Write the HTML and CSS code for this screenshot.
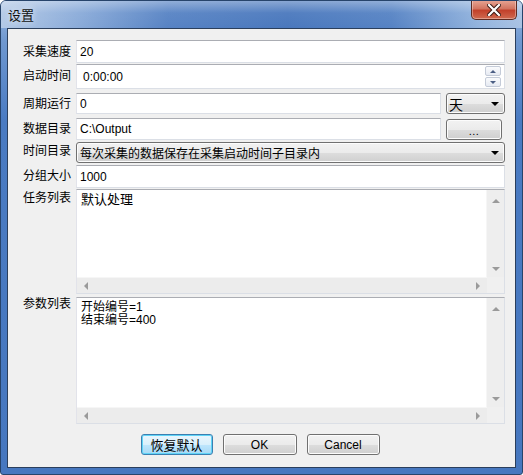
FILE: index.html
```html
<!DOCTYPE html>
<html lang="zh-CN">
<head>
  <meta charset="UTF-8">
  <title>设置</title>
  <link rel="stylesheet" href="styles.css">
</head>
<body>
  <div class="window">
    <div class="titlebar">
      <span class="title">设置</span>
      <div class="close-btn">
        <svg width="14" height="12" viewBox="0 0 14 12">
          <path d="M2 1 L12 11 M12 1 L2 11" stroke="#3a1a14" stroke-width="4.2" stroke-linecap="square"/>
          <path d="M2 1 L12 11 M12 1 L2 11" stroke="#ffffff" stroke-width="2.2" stroke-linecap="square"/>
        </svg>
      </div>
    </div>

    <div class="client">
      <div class="form">
        <div class="row r1">
          <label>采集速度</label>
          <div class="field edit h23"><span class="val">20</span></div>
        </div>

        <div class="row r2">
          <label>启动时间</label>
          <div class="field edit h25 spin-edit">
            <span class="val time">0:00:00</span>
            <div class="spinner">
              <div class="spin-btn"><span class="tri-up"></span></div>
              <div class="spin-btn"><span class="tri-down"></span></div>
            </div>
          </div>
        </div>

        <div class="row r3">
          <label>周期运行</label>
          <div class="split">
            <div class="field edit h21 grow"><span class="val">0</span></div>
            <div class="combo unit h21">
              <span class="combo-text">天</span>
              <span class="arrow"></span>
            </div>
          </div>
        </div>

        <div class="row r4">
          <label>数据目录</label>
          <div class="split">
            <div class="field edit h22 grow"><span class="val">C:\Output</span></div>
            <div class="btn browse">...</div>
          </div>
        </div>

        <div class="row r5">
          <label>时间目录</label>
          <div class="combo h21">
            <span class="combo-text">每次采集的数据保存在采集启动时间子目录内</span>
            <span class="arrow"></span>
          </div>
        </div>

        <div class="row r6">
          <label>分组大小</label>
          <div class="field edit h23"><span class="val">1000</span></div>
        </div>

        <div class="row r7">
          <label class="top">任务列表</label>
          <div class="memo h104">
            <div class="memo-body">
              <div class="memo-text">默认处理</div>
              <div class="vscroll">
                <span class="sa-up"></span>
                <span class="sa-down"></span>
              </div>
            </div>
            <div class="memo-foot">
              <div class="hscroll">
                <span class="sa-left"></span>
                <span class="sa-right"></span>
              </div>
              <div class="corner"></div>
            </div>
          </div>
        </div>

        <div class="row r8">
          <label class="top">参数列表</label>
          <div class="memo h126">
            <div class="memo-body">
              <div class="memo-text">开始编号=1<br>结束编号=400</div>
              <div class="vscroll">
                <span class="sa-up"></span>
                <span class="sa-down"></span>
              </div>
            </div>
            <div class="memo-foot">
              <div class="hscroll">
                <span class="sa-left"></span>
                <span class="sa-right"></span>
              </div>
              <div class="corner"></div>
            </div>
          </div>
        </div>
      </div>

      <div class="buttons">
        <div class="btn default w72">恢复默认</div>
        <div class="btn w74">OK</div>
        <div class="btn w73">Cancel</div>
      </div>
    </div>
  </div>
</body>
</html>
```

FILE: styles.css
```css
body {
  margin: 0;
  background-color: #ffffff;
  font-family: 'Liberation Sans', 'Noto Sans CJK SC', sans-serif;
  font-size: 12px;
  color: #000;
}
.window {
  width: 523px;
  height: 475px;
  box-sizing: border-box;
  border: 1px solid #27446b;
  border-radius: 6px 6px 3px 3px;
  background: linear-gradient(to bottom, #9fbbe0 0px, #6f98d0 40px, #4a7bc2 120px, #4677bf 100%);
  display: flex;
  flex-direction: column;
  overflow: hidden;
}
.titlebar {
  height: 27px;
  display: flex;
  align-items: flex-start;
  position: relative;
  background:
    linear-gradient(to bottom, rgba(255,255,255,0.35) 0px, rgba(255,255,255,0.05) 12px, rgba(0,0,0,0) 27px),
    linear-gradient(to right, #b3c9e6 0%, #8aabd9 15%, #5783c4 32%, #4a78bd 55%, #5683c4 75%, #93b4de 92%, #a9c2e3 100%);
}
.title {
  font-family: 'Noto Sans CJK SC', sans-serif;
  font-size: 13px;
  color: #111;
  margin: 5px 0 0 7px;
  line-height: 18px;
  text-shadow: 0 0 6px rgba(255,255,255,0.9);
}
.close-btn {
  position: absolute;
  top: -1px;
  right: 5px;
  width: 46px;
  height: 20px;
  box-sizing: border-box;
  border: 1px solid #5e2b22;
  border-top: none;
  border-radius: 0 0 5px 5px;
  background: linear-gradient(to bottom, #e8a796 0%, #d27561 45%, #c2412b 55%, #d06a50 100%);
  box-shadow: inset 0 0 0 1px rgba(255,255,255,0.35);
  display: flex;
  align-items: center;
  justify-content: center;
}
.client {
  flex-grow: 1;
  margin: 0 6px 6px 6px;
  background-color: #f0f0f0;
  border: 1px solid #2b3f5c;
  display: flex;
  flex-direction: column;
}
.form {
  padding: 11px 10px 0 15px;
  display: flex;
  flex-direction: column;
}
.row {
  display: flex;
  align-items: flex-start;
}
.row label {
  width: 53px;
  flex-shrink: 0;
  font-family: 'Noto Sans CJK SC', sans-serif;
  font-size: 12px;
  line-height: 16px;
  padding-top: 3px;
  color: #000;
}
.row label.top {
  padding-top: 0;
}
.r1 { height: 24px; }
.r2 { height: 29px; }
.r3 { height: 25px; }
.r3 label { padding-top: 2px; }
.r4 { height: 24px; }
.r4 label { padding-top: 2px; }
.r5 { height: 23px; }
.r5 label { padding-top: 0; }
.r6 { height: 24px; }
.r6 label { padding-top: 2px; }
.r7 { height: 108px; }
.r8 { height: 127px; }
.r8 label { margin-top: -2px; }

.field, .combo, .memo {
  flex-grow: 1;
  box-sizing: border-box;
}
.h21 { height: 21px; }
.h22 { height: 22px; }
.h23 { height: 23px; }
.h25 { height: 25px; }
.h104 { height: 105px; }
.h126 { height: 127px; }

.edit {
  background-color: #ffffff;
  border: 1px solid #dbdfe6;
  border-top-color: #abadb3;
  border-left-color: #e2e3ea;
  display: flex;
  align-items: center;
  padding-left: 3px;
}
.val {
  font-family: 'Liberation Sans', sans-serif;
  font-size: 12px;
  line-height: 14px;
}
.val.time {
  padding-left: 3px;
}
.spin-edit {
  justify-content: space-between;
}
.spinner {
  width: 16px;
  margin-right: 3px;
  display: flex;
  flex-direction: column;
  gap: 1px;
}
.spin-btn {
  height: 10px;
  box-sizing: border-box;
  border: 1px solid #c4cbd8;
  border-radius: 2px;
  background: linear-gradient(to bottom, #fafbfd, #e6eaf2);
  display: flex;
  align-items: center;
  justify-content: center;
}
.tri-up {
  width: 0;
  height: 0;
  border-left: 3px solid transparent;
  border-right: 3px solid transparent;
  border-bottom: 3px solid #4b5e84;
}
.tri-down {
  width: 0;
  height: 0;
  border-left: 3px solid transparent;
  border-right: 3px solid transparent;
  border-top: 3px solid #4b5e84;
}
.split {
  flex-grow: 1;
  display: flex;
  gap: 5px;
}
.grow {
  flex-grow: 1;
}
.combo {
  border: 1px solid #707070;
  border-radius: 3px;
  background: linear-gradient(to bottom, #f2f2f2 0%, #ebebeb 50%, #dddddd 51%, #cfcfcf 100%);
  box-shadow: inset 0 0 0 1px #fcfcfc;
  display: flex;
  align-items: center;
  justify-content: space-between;
  padding: 0 5px 0 3px;
}
.combo.unit {
  flex-grow: 0;
  width: 59px;
  padding-left: 2px;
}
.combo-text {
  font-family: 'Noto Sans CJK SC', sans-serif;
  font-size: 12px;
  line-height: 16px;
}
.unit .combo-text {
  font-size: 14px;
}
.arrow {
  width: 0;
  height: 0;
  border-left: 4px solid transparent;
  border-right: 4px solid transparent;
  border-top: 4px solid #000;
  margin-top: 1px;
}
.btn {
  box-sizing: border-box;
  height: 21px;
  border: 1px solid #707070;
  border-radius: 3px;
  background: linear-gradient(to bottom, #f2f2f2 0%, #ebebeb 50%, #dddddd 51%, #cfcfcf 100%);
  box-shadow: inset 0 0 0 1px #fcfcfc;
  display: flex;
  align-items: center;
  justify-content: center;
  font-size: 12px;
  line-height: 14px;
}
.browse {
  width: 56px;
  height: 21px;
  margin-top: 1px;
  margin-right: 3px;
  font-size: 11px;
  padding-top: 3px;
  letter-spacing: 0.5px;
}
.memo {
  border: 1px solid #dbdfe6;
  border-top-color: #abadb3;
  border-left-color: #e2e3ea;
  background-color: #ffffff;
  display: flex;
  flex-direction: column;
}
.memo-body {
  flex-grow: 1;
  display: flex;
}
.memo-text {
  flex-grow: 1;
  font-family: 'Liberation Sans', 'Noto Sans CJK SC', sans-serif;
  font-size: 12px;
  line-height: 13px;
  padding: 3px 0 0 4px;
}
.r7 .memo-text {
  font-size: 13px;
  line-height: 16px;
  padding-top: 2px;
}
.vscroll {
  width: 17px;
  background-color: #eeeeee;
  border-left: 1px solid #f6f6f6;
  display: flex;
  flex-direction: column;
  justify-content: space-between;
  align-items: center;
  padding: 9px 0 6px;
}
.memo-foot {
  height: 16px;
  display: flex;
}
.hscroll {
  flex-grow: 1;
  background-color: #ececec;
  border-top: 1px solid #f6f6f6;
  display: flex;
  justify-content: space-between;
  align-items: center;
  padding: 0 7px 0 7px;
}
.corner {
  width: 17px;
  background-color: #f0f0f0;
}
.sa-up {
  width: 0;
  height: 0;
  border-left: 4px solid transparent;
  border-right: 4px solid transparent;
  border-bottom: 4px solid #9a9a9a;
}
.sa-down {
  width: 0;
  height: 0;
  border-left: 4px solid transparent;
  border-right: 4px solid transparent;
  border-top: 4px solid #9a9a9a;
}
.sa-left {
  width: 0;
  height: 0;
  border-top: 4px solid transparent;
  border-bottom: 4px solid transparent;
  border-right: 4px solid #9a9a9a;
}
.sa-right {
  width: 0;
  height: 0;
  border-top: 4px solid transparent;
  border-bottom: 4px solid transparent;
  border-left: 4px solid #9a9a9a;
}
.buttons {
  display: flex;
  justify-content: center;
  gap: 10px;
  margin-top: 10px;
  padding-right: 3px;
}
.buttons .btn {
  font-family: 'Liberation Sans', 'Noto Sans CJK SC', sans-serif;
}
.btn.default {
  border-color: #3c7fb1;
  background: linear-gradient(to bottom, #eaf6fd 0%, #d9f0fc 50%, #bee6fd 51%, #a7d9f5 100%);
  box-shadow: inset 0 0 0 1px #5fd4f7;
  font-family: 'Noto Sans CJK SC', sans-serif;
  font-size: 13px;
}
.w72 { width: 72px; }
.w74 { width: 74px; }
.w73 { width: 73px; }
```
